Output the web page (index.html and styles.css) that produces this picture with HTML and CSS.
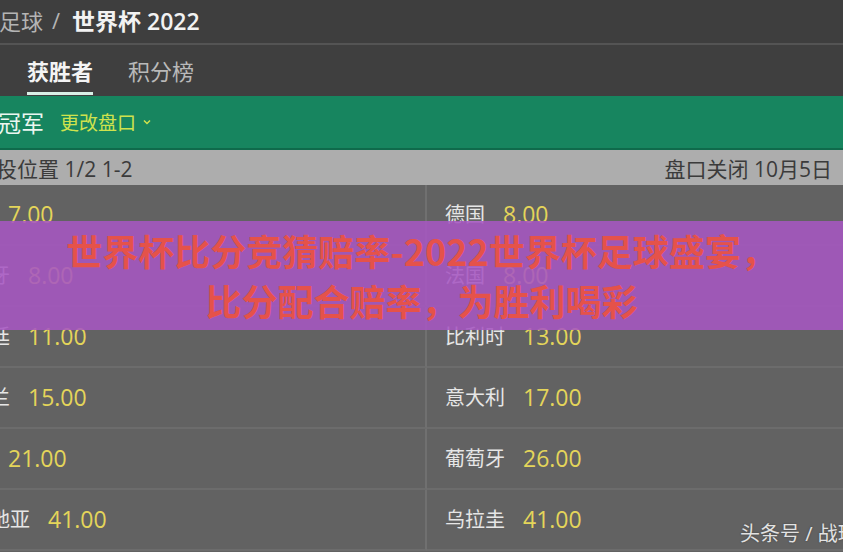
FILE: index.html
```html
<!DOCTYPE html>
<html lang="zh-CN">
<head>
    <meta charset="UTF-8">
    <meta name="viewport" content="width=device-width, initial-scale=1.0">
    <title>世界杯 2022 - 获胜者</title>
    <link rel="stylesheet" href="styles.css">
</head>
<body>
    <div class="page">
        <header class="crumb">
            <span class="crumb-sport">足球</span>
            <span class="crumb-sep">/</span>
            <span class="crumb-league">世界杯 2022</span>
        </header>

        <nav class="tabs">
            <a class="tab tab-active">获胜者</a>
            <a class="tab">积分榜</a>
        </nav>

        <div class="market-head">
            <span class="market-title">冠军</span>
            <span class="market-switch">更改盘口
                <svg width="8" height="6" viewBox="0 0 8 6"><polyline points="1,1.5 4,4.5 7,1.5" fill="none" stroke="currentColor" stroke-width="1.5"/></svg>
            </span>
        </div>

        <div class="market-info">
            <span>投位置 1/2 1-2</span>
            <span>盘口关闭 10月5日</span>
        </div>

        <div class="odds-grid">
            <div class="odds-cell"><span class="team">巴西</span><span class="price">7.00</span></div>
            <div class="odds-cell"><span class="team">德国</span><span class="price">8.00</span></div>
            <div class="odds-cell"><span class="team">西班牙</span><span class="price">8.00</span></div>
            <div class="odds-cell"><span class="team">法国</span><span class="price">8.00</span></div>
            <div class="odds-cell"><span class="team">阿根廷</span><span class="price">11.00</span></div>
            <div class="odds-cell"><span class="team">比利时</span><span class="price">13.00</span></div>
            <div class="odds-cell"><span class="team">英格兰</span><span class="price">15.00</span></div>
            <div class="odds-cell"><span class="team">意大利</span><span class="price">17.00</span></div>
            <div class="odds-cell"><span class="team">荷兰</span><span class="price">21.00</span></div>
            <div class="odds-cell"><span class="team">葡萄牙</span><span class="price">26.00</span></div>
            <div class="odds-cell"><span class="team">克罗地亚</span><span class="price">41.00</span></div>
            <div class="odds-cell"><span class="team">乌拉圭</span><span class="price">41.00</span></div>
        </div>
    </div>

    <div class="banner">
        <p>世界杯比分竞猜赔率-2022世界杯足球盛宴，</p>
        <p>比分配合赔率，为胜利喝彩</p>
    </div>

    <div class="watermark">头条号 / 战球</div>
</body>
</html>
```

FILE: styles.css
```css
html, body {
    margin: 0;
    height: 100%;
    overflow: hidden;
}
body {
    position: relative;
    background-color: #626262;
    font-family: "Open Sans", "Noto Sans CJK SC", sans-serif;
    color: #e8e8e8;
}
/* the shot is cropped on the left, so the page starts outside the window */
.page {
    margin-left: -60px;
    width: calc(100% + 60px);
}
.crumb {
    display: flex;
    align-items: center;
    gap: 9px;
    box-sizing: border-box;
    height: 45px;
    padding-left: 59px;
    padding-bottom: 4px;
    background-color: #3e3e3e;
    border-bottom: 2px solid #545454;
    font-size: 22px;
}
.crumb-sport,
.crumb-sep {
    color: #b4b4b4;
}
.crumb-league {
    margin-left: 3px;
    color: #f2f2f2;
    font-weight: 600;
    font-size: 23px;
}
.tabs {
    display: flex;
    gap: 35px;
    box-sizing: border-box;
    height: 51px;
    padding-left: 87px;
    padding-bottom: 1px;
    background-color: #3f3f3f;
}
.tab {
    display: flex;
    align-items: center;
    padding-top: 2px;
    border-bottom: 3px solid transparent;
    font-size: 22px;
    color: #b9b9b9;
}
.tab-active {
    color: #f4f4f4;
    font-weight: 600;
    border-bottom-color: #d9f1e7;
}
.market-head {
    display: flex;
    align-items: center;
    gap: 16px;
    box-sizing: border-box;
    height: 54px;
    padding-left: 58px;
    background-color: #17855f;
    border-bottom: 2px solid #0f6a4b;
}
.market-title {
    font-size: 23px;
    color: #eaf6f0;
}
.market-switch {
    display: flex;
    align-items: center;
    gap: 7px;
    font-size: 19px;
    color: #cfe24d;
}
.market-info {
    display: flex;
    justify-content: space-between;
    align-items: center;
    box-sizing: border-box;
    height: 35px;
    padding-left: 56px;
    padding-right: 11px;
    background-color: #adadad;
    font-size: 21px;
    color: #3b3b3b;
}
.odds-grid {
    display: grid;
    grid-template-columns: 487px 1fr;
}
.odds-cell {
    box-sizing: border-box;
    display: flex;
    align-items: center;
    gap: 18px;
    height: 61px;
    padding-left: 18px;
    padding-bottom: 2px;
    border-bottom: 2px solid #6c6c6c;
}
.odds-cell:nth-child(odd) {
    padding-left: 10px;
    border-right: 2px solid #707070;
}
.team {
    font-size: 20px;
    color: #e6e6e6;
}
.price {
    font-size: 23px;
    color: #e4d55a;
}
.banner {
    position: absolute;
    top: 221px;
    left: 0;
    right: 0;
    box-sizing: border-box;
    height: 109px;
    padding-top: 4px;
    background-color: rgba(166, 86, 194, 0.88);
    text-align: center;
    font-family: "Noto Sans CJK SC", sans-serif;
    font-size: 36px;
    font-weight: 700;
    line-height: 50px;
    color: #e5524a;
}
.banner p {
    margin: 0;
    white-space: nowrap;
}
.watermark {
    position: absolute;
    top: 518px;
    left: 740px;
    white-space: nowrap;
    font-size: 20px;
    color: #e2e2e2;
    text-shadow: 0 0 2px rgba(0, 0, 0, 0.4);
}
```
